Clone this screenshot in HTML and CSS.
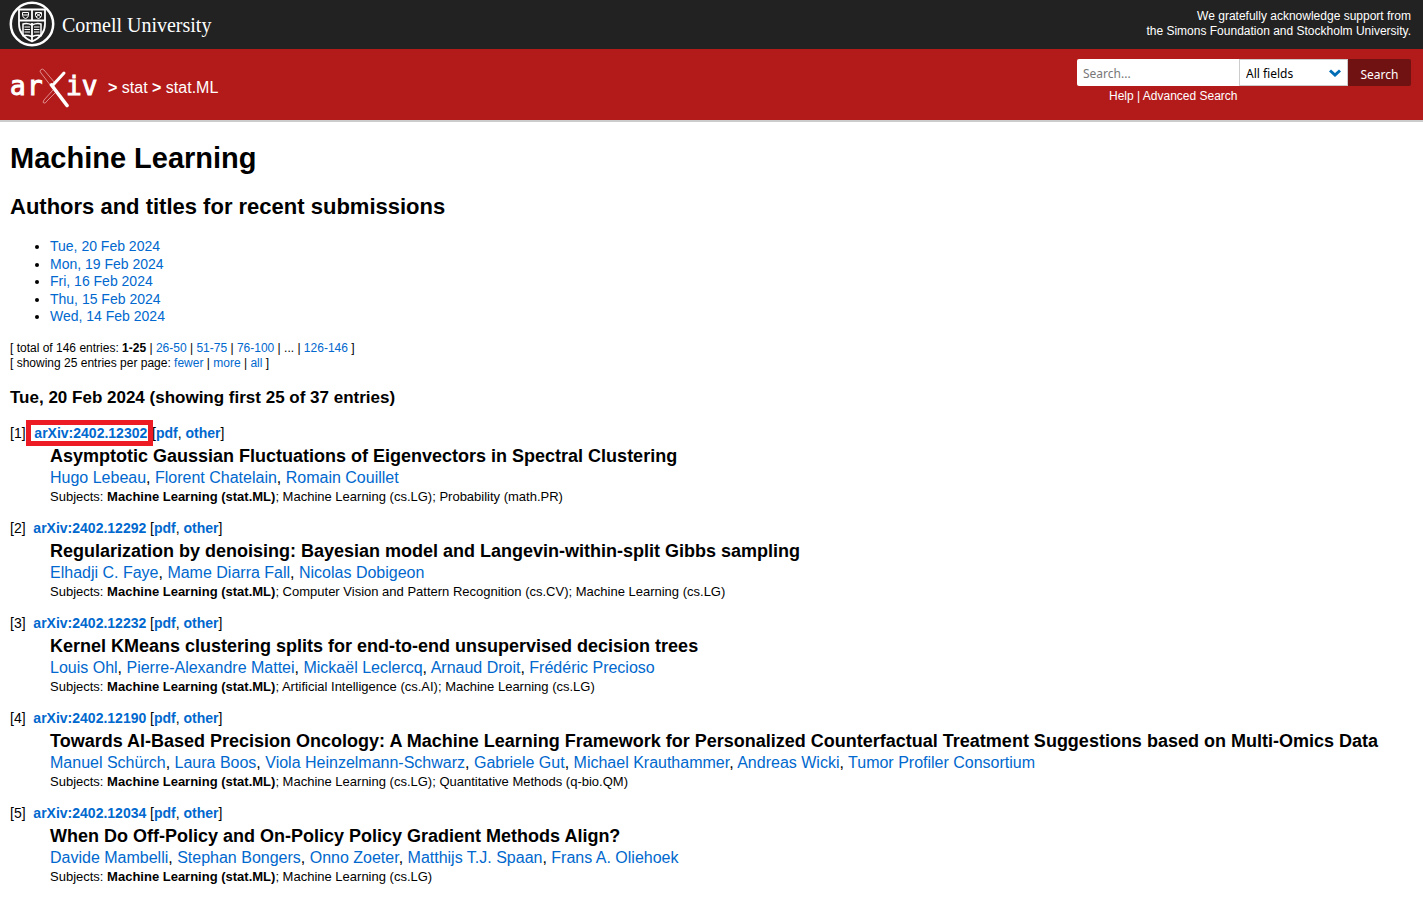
FILE: index.html
```html
<!DOCTYPE html>
<html lang="en">
<head>
<meta charset="utf-8">
<title>Machine Learning</title>
<link rel="stylesheet" href="styles.css">
</head>
<body>
<header>
  <div class="cornell">
    <a class="cornell-brand" href="#">
      <svg class="seal" viewBox="0 0 46 46" fill="none" stroke="#fff" aria-hidden="true">
        <circle cx="23" cy="23" r="21.2" stroke-width="2.500"/>
        <path d="M10 8.5H36V23C36 31 31 37 23 40.500C15 37 10 31 10 23Z" stroke-width="1.800"/>
        <path d="M10 19.500H36M23 8.500V19.500M23 22V40" stroke-width="1.800"/>
        <path d="M13.500 11.500H19.500V14.500Q19 17 16.500 17.500Q14 17 13.500 14.500ZM26.500 11.500H32.500V14.500Q32 17 29.500 17.500Q27 17 26.500 14.500ZM14 14H19M27 12L32 16M32 12L27 16" stroke-width="1"/>
        <path d="M23 24Q18 21.500 14 23V34.500Q18 33.500 23 35.500Q28 33.500 32 34.500V23Q28 21.500 23 24" stroke-width="1.500"/>
        <path d="M15.500 26H21M15.500 28.500H21M15.500 31H21M25 26H30.500M25 28.500H30.500M25 31H30.500" stroke-width="1.200"/>
      </svg>
      <span class="wordmark">Cornell University</span>
    </a>
    <p class="support">We gratefully acknowledge support from<br>the Simons Foundation and Stockholm University.</p>
  </div>
  <div class="banner">
    <div class="crumbs">
      <a href="#" aria-label="arXiv home"><svg class="logo" viewBox="0 0 88 40" fill="none" aria-hidden="true">
        <g class="logo-text"><text x="0" y="27">a</text><text x="17" y="27">r</text><text x="56" y="27">iv</text></g>
        <path d="M31 1.500Q29 3 31 5L41 18L45 15L34 2Q32.500 .5 31 1.500ZM43 22L34 32Q32 35 34 35Q35 36 37 33L46 24" stroke="#df8b8b" stroke-width="1"/>
        <path d="M54 5L43 17" stroke="#fff" stroke-width="3" stroke-linecap="round"/>
        <path d="M41.500 17L57 37.500" stroke="#fff" stroke-width="3.600" stroke-linecap="round"/>
      </svg></a>
      <span><b>&gt;</b> <a href="#">stat</a> <b>&gt;</b> <a href="#">stat.ML</a></span>
    </div>
    <form class="search">
      <div class="fields">
        <input type="text" placeholder="Search..." aria-label="Search term">
        <select aria-label="Field to search"><option>All fields</option></select>
        <button type="button">Search</button>
      </div>
      <p class="help"><a href="#">Help</a> | <a href="#">Advanced Search</a></p>
    </form>
  </div>
</header>
<main>
  <h1>Machine Learning</h1>
  <h2>Authors and titles for recent submissions</h2>
  <ul class="dates">
    <li><a href="#">Tue, 20 Feb 2024</a></li>
    <li><a href="#">Mon, 19 Feb 2024</a></li>
    <li><a href="#">Fri, 16 Feb 2024</a></li>
    <li><a href="#">Thu, 15 Feb 2024</a></li>
    <li><a href="#">Wed, 14 Feb 2024</a></li>
  </ul>
  <p class="paging">[ total of 146 entries: <b>1-25</b> | <a href="#">26-50</a> | <a href="#">51-75</a> | <a href="#">76-100</a> | ... | <a href="#">126-146</a> ]<br>[ showing 25 entries per page: <a href="#">fewer</a> | <a href="#">more</a> | <a href="#">all</a> ]</p>
  <h3>Tue, 20 Feb 2024 (showing first 25 of 37 entries)</h3>
  <dl>
    <dt>[1]&nbsp; <a class="marked" href="#">arXiv:2402.12302</a> [<a href="#">pdf</a>, <a href="#">other</a>]</dt>
    <dd>
      <div class="title">Asymptotic Gaussian Fluctuations of Eigenvectors in Spectral Clustering</div>
      <div class="authors"><a href="#">Hugo Lebeau</a>, <a href="#">Florent Chatelain</a>, <a href="#">Romain Couillet</a></div>
      <div class="subjects">Subjects: <b>Machine Learning (stat.ML)</b>; Machine Learning (cs.LG); Probability (math.PR)</div>
    </dd>
    <dt>[2]&nbsp; <a href="#">arXiv:2402.12292</a> [<a href="#">pdf</a>, <a href="#">other</a>]</dt>
    <dd>
      <div class="title">Regularization by denoising: Bayesian model and Langevin-within-split Gibbs sampling</div>
      <div class="authors"><a href="#">Elhadji C. Faye</a>, <a href="#">Mame Diarra Fall</a>, <a href="#">Nicolas Dobigeon</a></div>
      <div class="subjects">Subjects: <b>Machine Learning (stat.ML)</b>; Computer Vision and Pattern Recognition (cs.CV); Machine Learning (cs.LG)</div>
    </dd>
    <dt>[3]&nbsp; <a href="#">arXiv:2402.12232</a> [<a href="#">pdf</a>, <a href="#">other</a>]</dt>
    <dd>
      <div class="title">Kernel KMeans clustering splits for end-to-end unsupervised decision trees</div>
      <div class="authors"><a href="#">Louis Ohl</a>, <a href="#">Pierre-Alexandre Mattei</a>, <a href="#">Mickaël Leclercq</a>, <a href="#">Arnaud Droit</a>, <a href="#">Frédéric Precioso</a></div>
      <div class="subjects">Subjects: <b>Machine Learning (stat.ML)</b>; Artificial Intelligence (cs.AI); Machine Learning (cs.LG)</div>
    </dd>
    <dt>[4]&nbsp; <a href="#">arXiv:2402.12190</a> [<a href="#">pdf</a>, <a href="#">other</a>]</dt>
    <dd>
      <div class="title">Towards AI-Based Precision Oncology: A Machine Learning Framework for Personalized Counterfactual Treatment Suggestions based on Multi-Omics Data</div>
      <div class="authors"><a href="#">Manuel Schürch</a>, <a href="#">Laura Boos</a>, <a href="#">Viola Heinzelmann-Schwarz</a>, <a href="#">Gabriele Gut</a>, <a href="#">Michael Krauthammer</a>, <a href="#">Andreas Wicki</a>, <a href="#">Tumor Profiler Consortium</a></div>
      <div class="subjects">Subjects: <b>Machine Learning (stat.ML)</b>; Machine Learning (cs.LG); Quantitative Methods (q-bio.QM)</div>
    </dd>
    <dt>[5]&nbsp; <a href="#">arXiv:2402.12034</a> [<a href="#">pdf</a>, <a href="#">other</a>]</dt>
    <dd>
      <div class="title">When Do Off-Policy and On-Policy Policy Gradient Methods Align?</div>
      <div class="authors"><a href="#">Davide Mambelli</a>, <a href="#">Stephan Bongers</a>, <a href="#">Onno Zoeter</a>, <a href="#">Matthijs T.J. Spaan</a>, <a href="#">Frans A. Oliehoek</a></div>
      <div class="subjects">Subjects: <b>Machine Learning (stat.ML)</b>; Machine Learning (cs.LG)</div>
    </dd>
  </dl>
</main>
</body>
</html>
```
FILE: styles.css
```css
* { box-sizing: border-box; }
body { margin: 0; background: #fff; color: #000; font-family: "Liberation Sans", Arial, sans-serif; font-size: 14px; }
a { color: #0068ce; text-decoration: none; }
header a { color: inherit; }
p, h1, h2, h3, ul, dl, dd { margin: 0; }

.cornell { display: flex; justify-content: space-between; align-items: center; background: #222; color: #fff; padding: 1px 12px 2px 9px; }
.cornell-brand { display: flex; align-items: center; gap: 7px; }
.seal { width: 46px; height: 46px; display: block; }
.wordmark { font-family: "Liberation Serif", serif; font-size: 20px; padding-top: 2px; }
.support { font-size: 12px; line-height: 15px; text-align: right; }

.banner { display: flex; justify-content: space-between; align-items: flex-start; background: #b31b1b; color: #fff; border-bottom: 2px solid #ccc; padding: 10px 12px 12px 10px; }
.crumbs { display: flex; align-items: center; gap: 10px; padding-top: 9px; font-size: 16px; }
.logo { width: 88px; height: 40px; display: block; }
.logo-text { font: 26px "DejaVu Sans Mono", monospace; fill: #fff; stroke: #fff; stroke-width: 1px; }
.fields { display: flex; height: 27px; }
.fields > * { font-family: "Noto Sans", "Open Sans", sans-serif; font-size: 12px; border: 0; margin: 0; height: 27px; }
.fields input { width: 162px; padding: 2px 6px 0; background: #fff; border-radius: 2px 0 0 2px; }
.fields input::placeholder { color: #777; opacity: 1; }
.fields select { appearance: none; width: 109px; padding: 2px 6px 0; border: 1px solid #ccc; color: #000; background: #fff url("data:image/svg+xml,%3Csvg xmlns='http://www.w3.org/2000/svg' width='12' height='8' fill='none' stroke='%23006db4' stroke-width='3'%3E%3Cpath d='M1 1.500L6 6L11 1.500'/%3E%3C/svg%3E") no-repeat right 6px center; }
.fields button { width: 63px; padding: 3px 0 0; background: #701112; color: #fff; border-radius: 0 2px 2px 0; }
.help { font-size: 12px; line-height: 20px; padding-left: 32px; }

main { padding: 20px 10px; }
h1 { font-size: 29px; line-height: 32px; }
h2 { font-size: 22px; line-height: 26px; margin-top: 20px; }
.dates { padding-left: 40px; margin-top: 18px; line-height: 1.25; }
.paging { font-size: 12px; line-height: 15px; margin-top: 15px; }
h3 { font-size: 17px; line-height: 20px; margin-top: 17px; }
dl { margin-top: 15px; }
dt { line-height: 20px; }
dt a { font-weight: bold; }
.marked { outline: 5px solid #ed1c24; padding: 0 1px 0 3px; margin: 0 0 0 -2px; }
dd { padding-left: 40px; margin-bottom: 12px; }
.title { font-size: 18px; font-weight: bold; line-height: 24px; padding-top: 1px; }
.authors { font-size: 16px; line-height: 19px; }
.subjects { font-size: 13px; line-height: 19px; }
```
